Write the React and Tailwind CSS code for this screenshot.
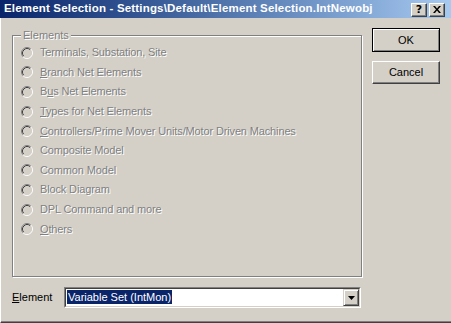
import React from "react";

function Radio() {
  return (
    <svg width="12" height="12" viewBox="0 0 12 12" className="shrink-0">
      <circle cx="6" cy="6" r="5" fill="#D4D0C8" />
      <path d="M9.89 2.11 A5.5 5.5 0 0 0 2.11 9.89" fill="none" stroke="#808080" strokeWidth="1" />
      <path d="M9.18 2.82 A4.5 4.5 0 0 0 2.82 9.18" fill="none" stroke="#404040" strokeWidth="1" />
      <path d="M9.89 2.11 A5.5 5.5 0 0 1 2.11 9.89" fill="none" stroke="#FFFFFF" strokeWidth="1" />
      <path d="M9.18 2.82 A4.5 4.5 0 0 1 2.82 9.18" fill="none" stroke="#D4D0C8" strokeWidth="1" />
    </svg>
  );
}

const items = [
  ["", "", "Terminals, Substation, Site"],
  ["", "B", "ranch Net Elements"],
  ["B", "u", "s Net Elements"],
  ["", "T", "ypes for Net Elements"],
  ["", "C", "ontrollers/Prime Mover Units/Motor Driven Machines"],
  ["", "", "Composite Model"],
  ["", "", "Common Model"],
  ["", "", "Block Diagram"],
  ["", "", "DPL Command and more"],
  ["", "O", "thers"],
];

function TitleButton({ children }) {
  return (
    <div className="w-[16px] h-[14px] bg-[#D4D0C8] border border-t-white border-l-white border-r-[#404040] border-b-[#404040] shadow-[inset_-1px_-1px_0_#808080] flex items-center justify-center">
      {children}
    </div>
  );
}

export default function App() {
  return (
    <div className="w-[451px] h-[323px] bg-[#D4D0C8] flex flex-col overflow-hidden font-['Liberation_Sans',Arial,sans-serif] text-[11px] leading-none select-none">
      {/* Title bar */}
      <div className="h-[18px] shrink-0 bg-linear-to-r from-[#0A246A] to-[#A6CAF0] flex items-center pl-[4px] pr-[6px]">
        <div className="flex-1 text-white font-bold text-[11.5px] whitespace-nowrap tracking-[0.18px]">
          Element Selection - Settings\Default\Element Selection.IntNewobj
        </div>
        <div className="flex gap-[2px] pt-[1px]">
          <TitleButton>
            <span className="text-black font-bold text-[11px] leading-none font-['DejaVu_Sans',sans-serif]">?</span>
          </TitleButton>
          <TitleButton>
            <svg width="8" height="7" viewBox="0 0 8 7">
              <path d="M0 0h2l2 2.5L6 0h2L5 3.5 8 7H6L4 4.5 2 7H0l3-3.5z" fill="#000" />
            </svg>
          </TitleButton>
        </div>
      </div>

      {/* Body */}
      <div className="flex-1 flex border-l border-l-white border-b border-b-[#404040]">
        <div className="flex-1 flex border-b border-b-[#808080]">
          {/* Left column */}
          <div className="pl-[11px] pt-[17px] flex flex-col">
            <div className="relative w-[350px] h-[242px] border border-[#808080] shadow-[inset_1px_1px_0_#fff,1px_1px_0_#fff]">
              <div className="absolute -top-[6px] left-[8px] px-[2px] bg-[#D4D0C8] text-[#808080] [text-shadow:1px_1px_0_#fff]">
                Elements
              </div>
              <div className="flex flex-col pt-[7px] pl-[8px]">
                {items.map(([pre, u, rest], i) => (
                  <div key={i} className="h-[19.6px] flex items-center gap-[7px]">
                    <Radio />
                    <span className="text-[#808080] [text-shadow:1px_1px_0_#fff] whitespace-nowrap tracking-[-0.14px]">
                      {pre}
                      {u && <u className="underline-offset-[1px]">{u}</u>}
                      {rest}
                    </span>
                  </div>
                ))}
              </div>
            </div>

            {/* Element row */}
            <div className="mt-[10px] flex items-center">
              <div className="w-[52px] text-black">
                <u className="underline-offset-[1px]">E</u>lement
              </div>
              <div className="w-[297px] h-[21px] border border-t-[#808080] border-l-[#808080] border-r-white border-b-white">
                <div className="w-full h-full border border-t-[#404040] border-l-[#404040] border-r-[#D4D0C8] border-b-[#D4D0C8] bg-white flex items-center">
                  <div className="flex-1 pl-[1px]">
                    <span className="bg-[#0A246A] text-white px-[1px] py-[1px]">Variable Set (IntMon)</span>
                  </div>
                  <div className="w-[16px] h-full bg-[#D4D0C8] border border-t-[#D4D0C8] border-l-[#D4D0C8] border-r-[#404040] border-b-[#404040] shadow-[inset_1px_1px_0_#fff,inset_-1px_-1px_0_#808080] flex items-center justify-center">
                    <svg width="7" height="4" viewBox="0 0 7 4">
                      <path d="M0 0h7L3.5 4z" fill="#000" />
                    </svg>
                  </div>
                </div>
              </div>
            </div>
          </div>

          {/* Right column */}
          <div className="pl-[10px] pt-[10px] flex flex-col">
            <div className="w-[68px] h-[24px] border border-black shadow-[inset_1px_1px_0_#fff,inset_-1px_-1px_0_#808080] flex items-center justify-center text-black">
              OK
            </div>
            <div className="mt-[9px] w-[68px] h-[23px] border border-t-white border-l-white border-r-[#404040] border-b-[#404040] shadow-[inset_-1px_-1px_0_#808080] flex items-center justify-center text-black">
              Cancel
            </div>
          </div>
        </div>
      </div>
    </div>
  );
}
